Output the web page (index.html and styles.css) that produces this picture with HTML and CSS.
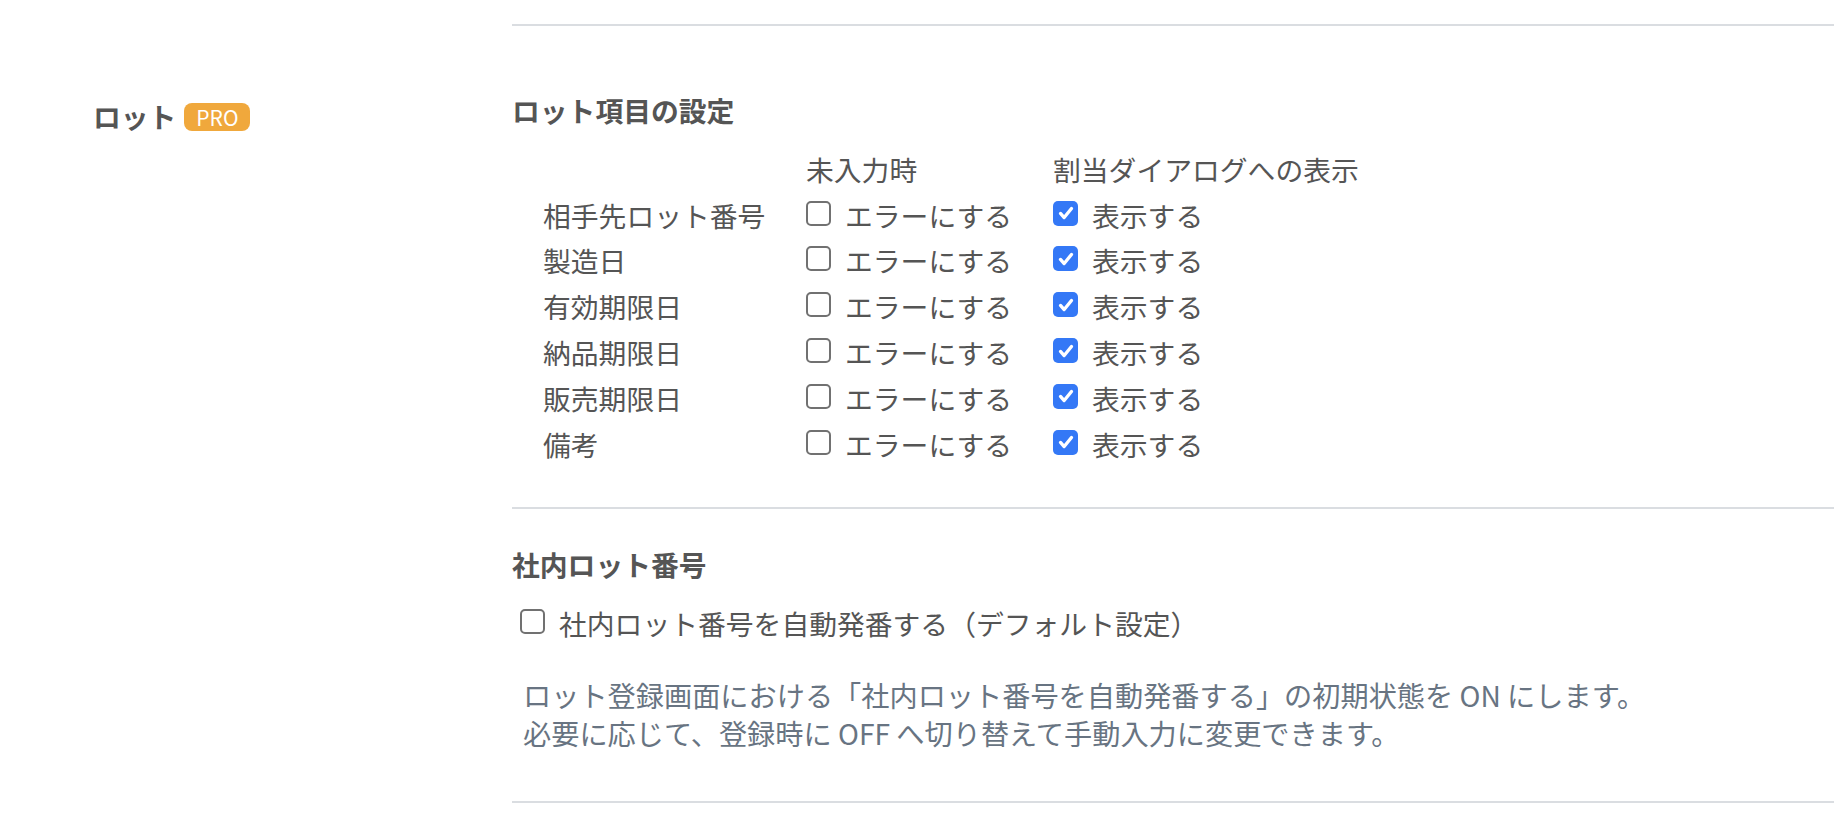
FILE: index.html
```html
<!DOCTYPE html>
<html lang="ja">
<head>
    <meta charset="UTF-8">
    <meta name="viewport" content="width=device-width, initial-scale=1.0">
    <title>ロット設定</title>
    <link rel="stylesheet" href="styles.css">
</head>
<body>
    <div class="settings-row">
        <div class="settings-label">
            <span class="label-text">ロット</span>
            <span class="badge-pro">PRO</span>
        </div>
        <div class="settings-body">
            <section class="section section-items">
                <h3 class="section-title">ロット項目の設定</h3>
                <div class="lot-table">
                    <div class="cell"></div>
                    <div class="cell head">未入力時</div>
                    <div class="cell head">割当ダイアログへの表示</div>

                    <div class="cell">相手先ロット番号</div>
                    <label class="cell check"><span class="box"></span>エラーにする</label>
                    <label class="cell check"><span class="box checked"><svg viewBox="0 0 24 24"><path d="M6 12.5l4 4.5 8-10" /></svg></span>表示する</label>

                    <div class="cell">製造日</div>
                    <label class="cell check"><span class="box"></span>エラーにする</label>
                    <label class="cell check"><span class="box checked"><svg viewBox="0 0 24 24"><path d="M6 12.5l4 4.5 8-10" /></svg></span>表示する</label>

                    <div class="cell">有効期限日</div>
                    <label class="cell check"><span class="box"></span>エラーにする</label>
                    <label class="cell check"><span class="box checked"><svg viewBox="0 0 24 24"><path d="M6 12.5l4 4.5 8-10" /></svg></span>表示する</label>

                    <div class="cell">納品期限日</div>
                    <label class="cell check"><span class="box"></span>エラーにする</label>
                    <label class="cell check"><span class="box checked"><svg viewBox="0 0 24 24"><path d="M6 12.5l4 4.5 8-10" /></svg></span>表示する</label>

                    <div class="cell">販売期限日</div>
                    <label class="cell check"><span class="box"></span>エラーにする</label>
                    <label class="cell check"><span class="box checked"><svg viewBox="0 0 24 24"><path d="M6 12.5l4 4.5 8-10" /></svg></span>表示する</label>

                    <div class="cell">備考</div>
                    <label class="cell check"><span class="box"></span>エラーにする</label>
                    <label class="cell check"><span class="box checked"><svg viewBox="0 0 24 24"><path d="M6 12.5l4 4.5 8-10" /></svg></span>表示する</label>
                </div>
            </section>
            <section class="section section-internal">
                <h3 class="section-title">社内ロット番号</h3>
                <label class="check auto-number"><span class="box"></span>社内ロット番号を自動発番する（デフォルト設定）</label>
                <p class="note">
                    ロット登録画面における「社内ロット番号を自動発番する」の初期状態を ON にします。<br>
                    必要に応じて、登録時に OFF へ切り替えて手動入力に変更できます。
                </p>
            </section>
        </div>
    </div>
</body>
</html>
```

FILE: styles.css
```css
* {
    margin: 0;
    padding: 0;
    box-sizing: border-box;
}
body {
    font-family: "Noto Sans CJK JP", "Noto Sans", sans-serif;
    font-size: 27.8px;
    color: #555555;
    background: #ffffff;
    overflow: hidden;
}
.settings-row {
    display: flex;
}
.settings-label {
    width: 512px;
    flex-shrink: 0;
    padding-top: 93px;
    padding-left: 93px;
    display: flex;
    align-items: center;
    align-self: flex-start;
    height: 139px;
    gap: 8px;
}
.label-text {
    font-weight: bold;
    line-height: 46px;
}
.badge-pro {
    display: inline-flex;
    align-items: center;
    justify-content: center;
    width: 66px;
    height: 28px;
    border-radius: 8px;
    background-color: #f0a83c;
    color: #ffffff;
    font-size: 21px;
    line-height: 28px;
    margin-top: 1px;
}
.settings-body {
    flex: 1;
    margin-top: 24px;
    border-top: 2px solid #dadde1;
}
.section {
    border-bottom: 2px solid #dadde1;
}
.section-title {
    font-size: 27.8px;
    font-weight: bold;
    line-height: 46px;
}
.section-items {
    padding-top: 61px;
    padding-bottom: 40px;
}
.lot-table {
    margin-top: 13px;
    padding-left: 31px;
    display: grid;
    grid-template-columns: 263px 247px auto;
    grid-auto-rows: 45.8px;
}
.cell {
    display: flex;
    align-items: center;
    white-space: nowrap;
}
.check {
    display: flex;
    align-items: center;
    gap: 14px;
    cursor: pointer;
}
.box {
    display: inline-flex;
    align-items: center;
    justify-content: center;
    width: 25px;
    height: 25px;
    border: 2px solid #717171;
    border-radius: 5px;
    background: #ffffff;
    flex-shrink: 0;
    margin-top: -3px;
}
.box.checked {
    border: none;
    background: #3478f6;
}
.box svg {
    width: 22px;
    height: 22px;
    fill: none;
    stroke: #ffffff;
    stroke-width: 3.6;
    stroke-linecap: round;
    stroke-linejoin: round;
}
.section-internal {
    padding-top: 32px;
    padding-bottom: 48px;
}
.auto-number {
    margin-top: 13px;
    padding-left: 8px;
    height: 46px;
}
.note {
    margin-top: 30px;
    padding-left: 11px;
    font-size: 28.2px;
    line-height: 38.5px;
    color: #687482;
}
```
